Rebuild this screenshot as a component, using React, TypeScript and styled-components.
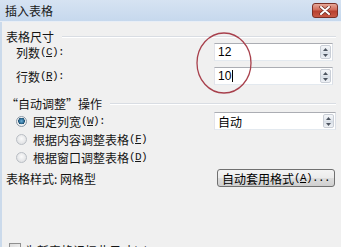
import React from "react";
import styled, { createGlobalStyle } from "styled-components";

const Global = createGlobalStyle`
  * { box-sizing: border-box; }
  html, body { margin: 0; padding: 0; background: #f0f0f0; }
  body { font-family: "Noto Sans CJK SC", "Noto Sans", sans-serif; }
`;

const Window = styled.div`
  position: relative;
  width: 341px;
  height: 247px;
  overflow: hidden;
  background: #f0f0f0;
  display: flex;
  flex-direction: column;
  font-family: "Noto Sans CJK SC", "Noto Sans", sans-serif;
  font-size: 12px;
  color: #141414;
`;

const TitleBar = styled.div`
  height: 22px;
  flex: none;
  display: flex;
  align-items: center;
  justify-content: space-between;
  padding: 0 3px 0 5px;
  background: linear-gradient(180deg, #d6e3f2 0%, #c6d8ed 100%);
  border-bottom: 1px solid #e8eef6;
`;

const Title = styled.span`
  font-size: 12px;
  line-height: 14px;
  color: #1a1a1a;
`;

const CloseButton = styled.div`
  width: 26px;
  height: 15px;
  border: 1px solid #7a2f25;
  border-radius: 3px;
  background: linear-gradient(180deg, #e6a898 0%, #d06a58 45%, #b8402f 55%, #c85a45 100%);
  display: flex;
  align-items: center;
  justify-content: center;
`;

const Body = styled.div`
  flex: 1;
  display: flex;
  flex-direction: column;
  padding: 8px 5px 0 4px;
  border-left: 2px solid #cbdaeb;
`;

const Header = styled.div<{ $mt?: number }>`
  display: flex;
  align-items: center;
  gap: 8px;
  height: 13px;
  line-height: 13px;
  margin-top: ${(p) => p.$mt ?? 0}px;
`;

const Rule = styled.div`
  flex: 1;
  height: 2px;
  border-top: 1px solid #d9dde3;
  border-bottom: 1px solid #ffffff;
`;

const Row = styled.div<{ $mt?: number; $indent?: number }>`
  display: grid;
  grid-template-columns: 1fr auto;
  align-items: center;
  height: 18px;
  margin-top: ${(p) => p.$mt ?? 0}px;
  padding-left: ${(p) => p.$indent ?? 10}px;
`;

const Label = styled.span`
  display: flex;
  align-items: center;
  white-space: nowrap;
`;

const Key = styled.span`
  font-family: "Liberation Mono", "DejaVu Sans Mono", monospace;
  font-size: 11px;
  letter-spacing: -0.6px;
`;

const U = styled.span`
  text-decoration: underline;
`;

const Field = styled.div<{ $w: number; $mr: number }>`
  width: ${(p) => p.$w}px;
  margin-right: ${(p) => p.$mr}px;
  height: 18px;
  display: flex;
  align-items: center;
  background: #fff;
  border: 1px solid #abadb3;
  border-right-color: #dbdfe6;
  border-bottom-color: #e3e9ef;
  border-left-color: #e2e3ea;
  padding: 0 1px 0 3px;
`;

const FieldText = styled.span`
  flex: 1;
  display: flex;
  align-items: center;
  font-family: "Liberation Sans", "Noto Sans CJK SC", sans-serif;
  font-size: 12px;
  color: #000;
`;

const ComboText = styled.span`
  flex: 1;
  font-size: 12px;
  color: #000;
`;

const Caret = styled.span`
  display: inline-block;
  width: 1px;
  height: 12px;
  background: #000;
  margin-left: 1px;
`;

const Spinner = styled.div`
  width: 11px;
  height: 14px;
  display: flex;
  flex-direction: column;
  border: 1px solid #c9ced6;
  border-radius: 2px;
  background: linear-gradient(180deg, #f4f6f9 0%, #e1e6ec 50%, #d6dde6 51%, #eef1f5 100%);
`;

const SpinHalf = styled.div`
  flex: 1;
  display: flex;
  align-items: center;
  justify-content: center;
`;

const Radio = styled.span<{ $on?: boolean }>`
  width: 11px;
  height: 11px;
  border-radius: 50%;
  border: 1px solid ${(p) => (p.$on ? "#8a98a6" : "#b9bec4")};
  background: ${(p) =>
    p.$on
      ? "radial-gradient(circle at 50% 45%, #6fb0d8 0%, #2f6f98 35%, #1e4b6a 48%, #f4f4f4 52%, #e4e6e8 100%)"
      : "radial-gradient(circle at 50% 40%, #fafafa 0%, #e6e7e9 60%, #d8dadc 100%)"};
  margin-right: 6px;
  flex: none;
`;

const PushButton = styled.div`
  width: 118px;
  height: 18px;
  margin-right: 1px;
  border: 1px solid #707070;
  border-radius: 3px;
  background: linear-gradient(180deg, #f4f4f4 0%, #ebebeb 50%, #dddddd 51%, #cfcfcf 100%);
  display: flex;
  align-items: center;
  padding-left: 4px;
  white-space: nowrap;
  color: #000;
`;

const CheckRow = styled.div`
  display: flex;
  align-items: flex-start;
  margin-top: 55px;
  padding-left: 3px;
  gap: 4px;
`;

const Check = styled.span`
  width: 12px;
  height: 12px;
  border: 1px solid #8f8f8f;
  background: linear-gradient(135deg, #dcdcdc, #f6f6f6);
  flex: none;
  margin-top: 1px;
`;

const Annotation = styled.svg`
  position: absolute;
  left: 194px;
  top: 31px;
  pointer-events: none;
`;

const Arrow = ({ up }: { up?: boolean }) => (
  <svg width="5" height="3" viewBox="0 0 5 3">
    <path d={up ? "M0 3 L2.5 0 L5 3 Z" : "M0 0 L2.5 3 L5 0 Z"} fill="#4d5560" />
  </svg>
);

const Spin = () => (
  <Spinner>
    <SpinHalf>
      <Arrow up />
    </SpinHalf>
    <SpinHalf>
      <Arrow />
    </SpinHalf>
  </Spinner>
);

export default function App() {
  return (
    <>
      <Global />
      <Window>
        <TitleBar>
          <Title>插入表格</Title>
          <CloseButton>
            <svg width="12" height="9" viewBox="0 0 12 9">
              <path d="M2 1 L10 8 M10 1 L2 8" stroke="#6b2a20" strokeWidth="3.4" strokeLinecap="round" />
              <path d="M2 1 L10 8 M10 1 L2 8" stroke="#ffffff" strokeWidth="2" strokeLinecap="round" />
            </svg>
          </CloseButton>
        </TitleBar>
        <Body>
          <Header>
            <span>表格尺寸</span>
            <Rule />
          </Header>
          <Row>
            <Label>
              列数<Key>(<U>C</U>):</Key>
            </Label>
            <Field $w={119} $mr={3}>
              <FieldText>12</FieldText>
              <Spin />
            </Field>
          </Row>
          <Row $mt={6}>
            <Label>
              行数<Key>(<U>R</U>):</Key>
            </Label>
            <Field $w={119} $mr={3}>
              <FieldText>
                10
                <Caret />
              </FieldText>
              <Spin />
            </Field>
          </Row>
          <Header $mt={12}>
            <span>“自动调整”操作</span>
            <Rule />
          </Header>
          <Row $mt={2}>
            <Label>
              <Radio $on />
              固定列宽<Key>(<U>W</U>):</Key>
            </Label>
            <Field $w={122} $mr={0}>
              <ComboText>自动</ComboText>
              <Spin />
            </Field>
          </Row>
          <Row>
            <Label>
              <Radio />
              根据内容调整表格<Key>(<U>F</U>)</Key>
            </Label>
          </Row>
          <Row>
            <Label>
              <Radio />
              根据窗口调整表格<Key>(<U>D</U>)</Key>
            </Label>
          </Row>
          <Row $mt={3} $indent={0}>
            <Label>表格样式: 网格型</Label>
            <PushButton>
              自动套用格式<Key>(<U>A</U>)...</Key>
            </PushButton>
          </Row>
          <CheckRow>
            <Check />
            <span>为新表格记忆此尺寸(S)</span>
          </CheckRow>
        </Body>
        <Annotation width="62" height="66" viewBox="0 0 62 66">
          <ellipse cx="30" cy="32" rx="27" ry="30" fill="none" stroke="#a8404c" strokeWidth="1.3" />
        </Annotation>
      </Window>
    </>
  );
}
